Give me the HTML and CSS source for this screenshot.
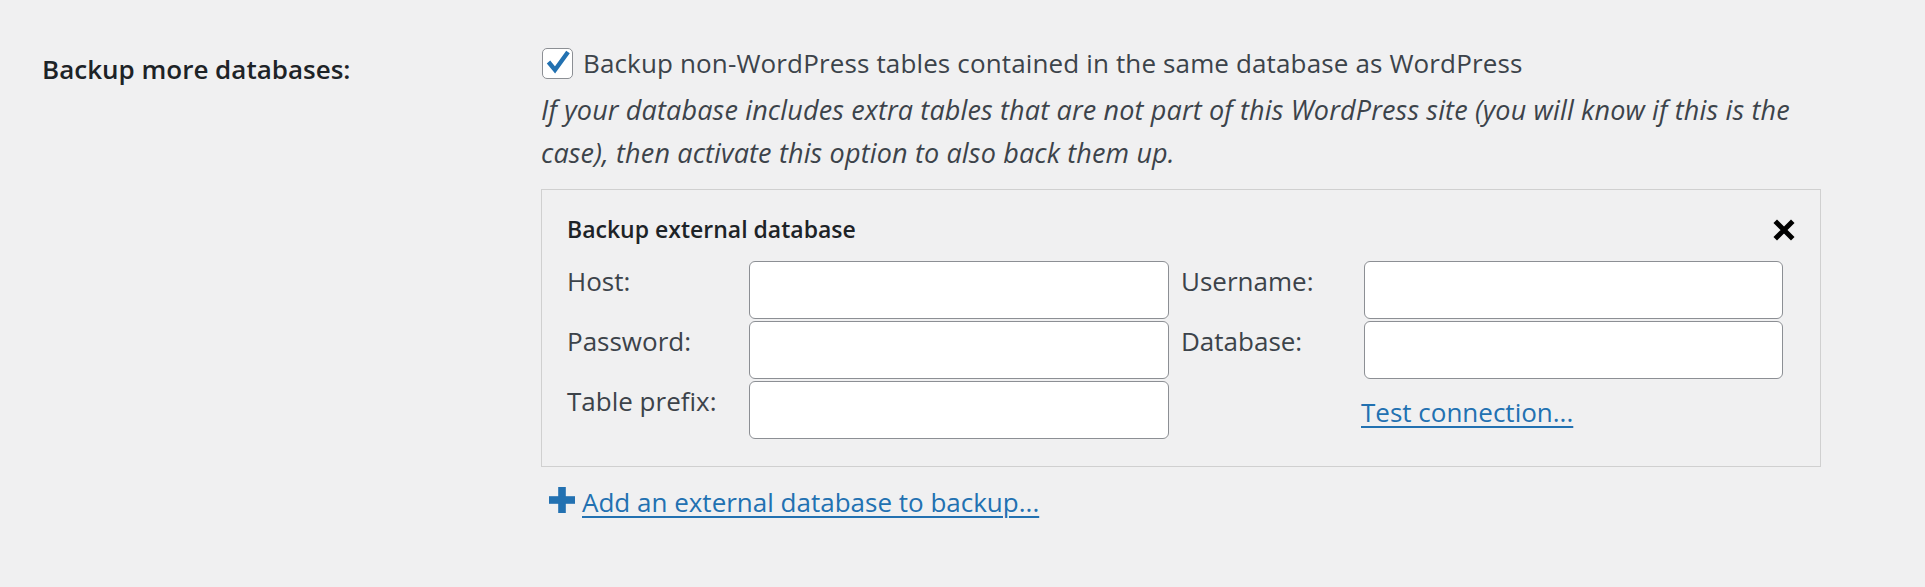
FILE: index.html
```html
<!DOCTYPE html>
<html lang="en">
<head>
<meta charset="utf-8">
<title>Backup more databases</title>
<link rel="stylesheet" href="styles.css">
</head>
<body>
<div class="form-row">
  <div class="row-label">Backup more databases:</div>
  <div class="row-field">
    <label class="check-line">
      <span class="checkbox"><svg width="31" height="31" viewBox="0 0 31 31" aria-hidden="true"><polyline points="6.5,14 13,22 26,4" fill="none" stroke="#2271b1" stroke-width="4.4" stroke-linejoin="miter"/></svg></span>
      <span class="check-text">Backup non-WordPress tables contained in the same database as WordPress</span>
    </label>
    <p class="description">If your database includes extra tables that are not part of this WordPress site (you will know if this is the case), then activate this option to also back them up.</p>
    <div class="extdb">
      <div class="extdb-head">
        <h4 class="extdb-title">Backup external database</h4>
        <span class="extdb-remove" title="Remove"><svg width="22" height="22" viewBox="0 0 22 22" aria-hidden="true"><path d="M4 4L18 18M18 4L4 18" stroke="#000" stroke-width="5" stroke-linecap="square"/></svg></span>
      </div>
      <div class="extdb-grid">
        <label>Host:</label><input class="field" type="text">
        <label class="col3">Username:</label><input class="field" type="text">
        <label>Password:</label><input class="field" type="password">
        <label class="col3">Database:</label><input class="field" type="text">
        <label>Table prefix:</label><input class="field" type="text">
        <span class="col3"></span><a class="test" href="#">Test connection...</a>
      </div>
    </div>
    <a class="add-db" href="#"><svg class="plus" width="26" height="26" viewBox="0 0 26 26" aria-hidden="true"><rect x="9.2" y="0" width="7.6" height="26" fill="#2271b1"/><rect x="0" y="9.2" width="26" height="7.6" fill="#2271b1"/></svg><span class="add-text">Add an external database to backup...</span></a>
  </div>
</div>
</body>
</html>
```

FILE: styles.css
```css
* { box-sizing: border-box; }
html, body { margin: 0; background: #f0f0f1; }
body {
  font-family: "Open Sans", "Noto Sans", sans-serif;
  font-size: 26px;
  color: #3c434a;
  width: 1925px;
  height: 587px;
  overflow: hidden;
}
.form-row { display: flex; align-items: flex-start; padding-left: 42px; }
.row-label {
  width: 499px;
  flex: none;
  padding-top: 52px;
  font-weight: 600;
  color: #1d2327;
  line-height: 34px;
}
.row-field { width: 1280px; flex: none; padding-top: 46px; }
.check-line { display: flex; align-items: center; gap: 10px; line-height: 34px; }
.check-text { letter-spacing: 0.14px; }
.checkbox {
  width: 31px; height: 31px; flex: none;
  border: 1px solid #8c8f94; border-radius: 5px;
  background: #fff; display: flex; overflow: hidden;
  margin-left: 1px;
}
.checkbox svg { margin: -1px; }
.description {
  margin: 7.5px 0 0; font-style: italic; line-height: 43px;
  font-size: 27px; letter-spacing: 0.15px;
}
.extdb { margin-top: 15.6px; border: 1px solid #d0d0d0; padding: 23px 25px 27px; }
.extdb-head { display: flex; justify-content: space-between; align-items: flex-start; }
.extdb-title { margin: 0; font-size: 23px; font-weight: 600; line-height: 32px; color: #1d2327; }
.extdb-remove { margin-top: 6px; width: 22px; height: 22px; display: flex; cursor: pointer; }
.extdb-grid {
  margin-top: 16px;
  display: grid;
  grid-template-columns: 182px 420px 195px 419px;
  grid-auto-rows: 58px;
  row-gap: 2px;
}
.extdb-grid label { line-height: 40px; }
.extdb-grid .col3 { padding-left: 12px; }
.field {
  width: 100%; height: 58px; margin: 0; padding: 0 12px;
  border: 1px solid #8c8f94; border-radius: 6px; background: #fff;
  font: inherit;
}
.test {
  padding-top: 10.6px; margin-left: -3px; line-height: 40px;
  color: #2271b1; text-decoration: underline;
  text-decoration-thickness: 2px; text-underline-offset: 4px;
  justify-self: start; align-self: start;
}
.add-db {
  margin-top: 14.6px; display: flex; align-items: flex-start;
  line-height: 40px; color: #2271b1; text-decoration: none; width: max-content;
}
.plus { flex: none; margin: 5.5px 7px 0 8px; }
.add-text { text-decoration: underline; text-decoration-thickness: 2px; text-underline-offset: 4px; }
```
